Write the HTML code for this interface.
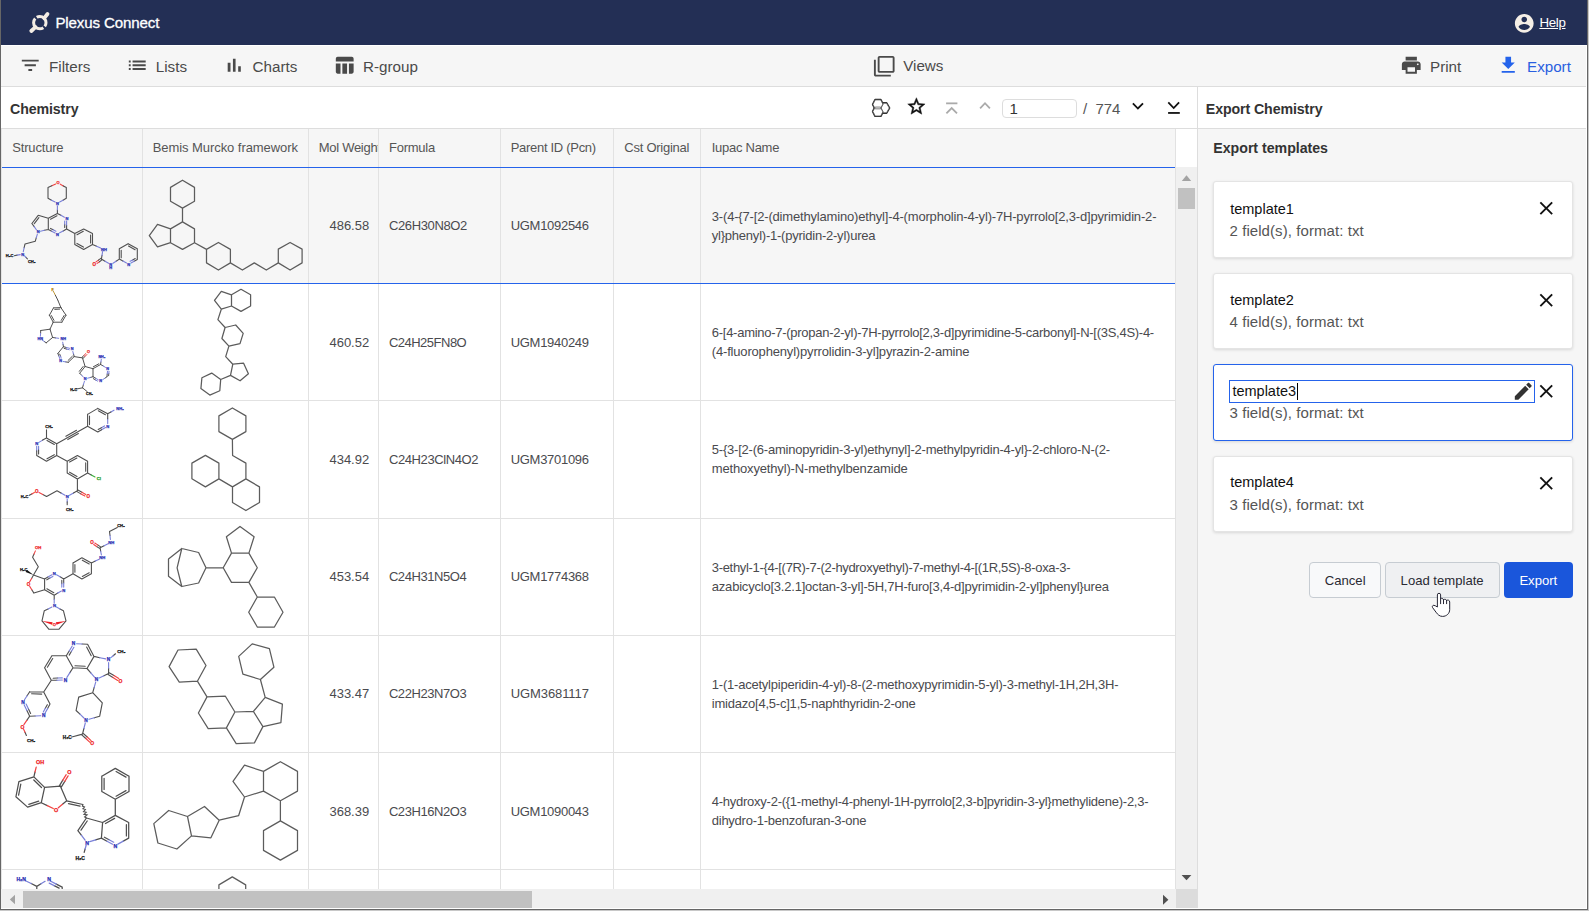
<!DOCTYPE html>
<html lang="en"><head><meta charset="utf-8"><title>Plexus Connect</title>
<style>
html,body{margin:0;padding:0;}
body{width:1589px;height:911px;overflow:hidden;position:relative;background:#fff;font-family:"Liberation Sans",sans-serif;}
.t{position:absolute;white-space:nowrap;line-height:normal;}
.b{position:absolute;}
svg{position:absolute;overflow:visible;}
</style></head><body>
<div class="b" style="left:0px;top:0px;width:1589px;height:44.5px;background:#232f55;"></div>
<span class="t" id="t1" style="left:55.4px;top:14.29px;font-size:15.1px;color:#fff;letter-spacing:-0.127px;-webkit-text-stroke:0.3px #fff;">Plexus Connect</span>
<span class="t" id="t2" style="left:1539.4px;top:14.75px;font-size:13.3px;color:#fff;letter-spacing:-0.303px;text-decoration:underline;">Help</span>
<div class="b" style="left:0px;top:46px;width:1589px;height:40px;background:#f6f6f6;"></div>
<div class="b" style="left:0px;top:86px;width:1589px;height:1px;background:#dddddd;"></div>
<span class="t" id="t3" style="left:49.1px;top:58.0px;font-size:15.2px;color:#4a4a4a;">Filters</span>
<span class="t" id="t4" style="left:155.8px;top:58.0px;font-size:15.2px;color:#4a4a4a;">Lists</span>
<span class="t" id="t5" style="left:252.6px;top:58.0px;font-size:15.2px;color:#4a4a4a;">Charts</span>
<span class="t" id="t6" style="left:363.0px;top:58.0px;font-size:15.2px;color:#4a4a4a;">R-group</span>
<span class="t" id="t7" style="left:903.2px;top:57.0px;font-size:15.2px;color:#4a4a4a;">Views</span>
<span class="t" id="t8" style="left:1430.0px;top:58.0px;font-size:15.2px;color:#4a4a4a;">Print</span>
<span class="t" id="t9" style="left:1527.0px;top:58.0px;font-size:15.2px;color:#2a5fe0;">Export</span>
<div class="b" style="left:0px;top:128px;width:1589px;height:1px;background:#dddddd;"></div>
<span class="t" id="t10" style="left:10px;top:100.92px;font-size:14.2px;color:#333;font-weight:700;letter-spacing:-0.105px;">Chemistry</span>
<span class="t" id="t11" style="left:1205.8px;top:100.92px;font-size:14.2px;color:#333;font-weight:700;letter-spacing:-0.101px;">Export Chemistry</span>
<div class="b" style="left:1002px;top:99px;width:75px;height:19px;background:#fff;box-sizing:border-box;border:1px solid #ddd;border-radius:4px;"></div>
<span class="t" id="t12" style="left:1009.5px;top:100.18px;font-size:15px;color:#333;">1</span>
<span class="t" id="t13" style="left:1083px;top:100.18px;font-size:15px;color:#555;">/</span>
<span class="t" id="t14" style="left:1095.5px;top:100.18px;font-size:15px;color:#555;letter-spacing:-0.052px;">774</span>
<div class="b" style="left:1197px;top:87px;width:1px;height:822px;background:#dddddd;"></div>
<div class="b" style="left:1198px;top:129px;width:389px;height:780px;background:#f6f6f6;"></div>
<span class="t" id="t15" style="left:1213.3px;top:139.92px;font-size:14.2px;color:#333;font-weight:700;letter-spacing:-0.026px;">Export templates</span>
<div class="b" style="left:1px;top:129px;width:1175px;height:38px;background:#f6f6f6;"></div>
<div class="b" style="left:1px;top:167px;width:1175px;height:1px;background:#2563eb;"></div>
<span class="t" id="t16" style="left:12.3px;top:140.03px;font-size:13px;color:#555;letter-spacing:-0.182px;">Structure</span>
<span class="t" id="t17" style="left:152.7px;top:140.03px;font-size:13px;color:#555;letter-spacing:-0.062px;">Bemis Murcko framework</span>
<div class="b" style="left:309px;top:129px;width:69px;height:38px;overflow:hidden;"><span class="t" id="t18" style="left:9.7px;top:11.03px;font-size:13px;color:#555;letter-spacing:-0.28px;">Mol Weight</span></div>
<span class="t" id="t19" style="left:389px;top:140.03px;font-size:13px;color:#555;letter-spacing:-0.26px;">Formula</span>
<span class="t" id="t20" style="left:510.7px;top:140.03px;font-size:13px;color:#555;letter-spacing:-0.296px;">Parent ID (Pcn)</span>
<span class="t" id="t21" style="left:624.3px;top:140.03px;font-size:13px;color:#555;letter-spacing:-0.254px;">Cst Original</span>
<span class="t" id="t22" style="left:711.7px;top:140.03px;font-size:13px;color:#555;letter-spacing:-0.263px;">Iupac Name</span>
<div class="b" style="left:1px;top:168px;width:1175px;height:115px;background:#f6f6f6;"></div>
<div class="b" style="left:1px;top:283px;width:1175px;height:1px;background:#2563eb;"></div>
<div class="b" style="left:1px;top:400px;width:1175px;height:1px;background:#e2e2e2;"></div>
<div class="b" style="left:1px;top:518px;width:1175px;height:1px;background:#e2e2e2;"></div>
<div class="b" style="left:1px;top:635px;width:1175px;height:1px;background:#e2e2e2;"></div>
<div class="b" style="left:1px;top:752px;width:1175px;height:1px;background:#e2e2e2;"></div>
<div class="b" style="left:1px;top:869px;width:1175px;height:1px;background:#e2e2e2;"></div>
<div class="b" style="left:142px;top:129px;width:1px;height:760px;background:#e2e2e2;"></div>
<div class="b" style="left:308px;top:129px;width:1px;height:760px;background:#e2e2e2;"></div>
<div class="b" style="left:378px;top:129px;width:1px;height:760px;background:#e2e2e2;"></div>
<div class="b" style="left:500px;top:129px;width:1px;height:760px;background:#e2e2e2;"></div>
<div class="b" style="left:613px;top:129px;width:1px;height:760px;background:#e2e2e2;"></div>
<div class="b" style="left:700px;top:129px;width:1px;height:760px;background:#e2e2e2;"></div>
<div class="b" style="left:1px;top:129px;width:1px;height:760px;background:#e4e4e4;"></div>
<div class="b" style="left:2px;top:167px;width:1174px;height:1px;background:#2563eb;"></div>
<div class="b" style="left:2px;top:283px;width:1174px;height:1px;background:#2563eb;"></div>
<span class="t" id="t23" style="left:329.5px;top:218.03px;font-size:13px;color:#4a4a4e;letter-spacing:-0.03px;">486.58</span>
<span class="t" id="t24" style="left:388.9px;top:218.03px;font-size:13px;color:#4a4a4e;letter-spacing:-0.364px;">C26H30N8O2</span>
<span class="t" id="t25" style="left:510.7px;top:218.03px;font-size:13px;color:#4a4a4e;letter-spacing:-0.29px;">UGM1092546</span>
<span class="t" id="t26" style="left:711.8px;top:209.03px;font-size:13px;color:#4a4a4e;letter-spacing:-0.176px;">3-(4-{7-[2-(dimethylamino)ethyl]-4-(morpholin-4-yl)-7H-pyrrolo[2,3-d]pyrimidin-2-</span>
<span class="t" id="t27" style="left:711.8px;top:228.03px;font-size:13px;color:#4a4a4e;letter-spacing:-0.227px;">yl}phenyl)-1-(pyridin-2-yl)urea</span>
<span class="t" id="t28" style="left:329.5px;top:335.03px;font-size:13px;color:#4a4a4e;letter-spacing:-0.03px;">460.52</span>
<span class="t" id="t29" style="left:388.9px;top:335.03px;font-size:13px;color:#4a4a4e;letter-spacing:-0.503px;">C24H25FN8O</span>
<span class="t" id="t30" style="left:510.7px;top:335.03px;font-size:13px;color:#4a4a4e;letter-spacing:-0.29px;">UGM1940249</span>
<span class="t" id="t31" style="left:711.8px;top:325.03px;font-size:13px;color:#4a4a4e;letter-spacing:-0.271px;">6-[4-amino-7-(propan-2-yl)-7H-pyrrolo[2,3-d]pyrimidine-5-carbonyl]-N-[(3S,4S)-4-</span>
<span class="t" id="t32" style="left:711.8px;top:344.03px;font-size:13px;color:#4a4a4e;letter-spacing:-0.176px;">(4-fluorophenyl)pyrrolidin-3-yl]pyrazin-2-amine</span>
<span class="t" id="t33" style="left:329.5px;top:452.03px;font-size:13px;color:#4a4a4e;letter-spacing:-0.03px;">434.92</span>
<span class="t" id="t34" style="left:388.9px;top:452.03px;font-size:13px;color:#4a4a4e;letter-spacing:-0.386px;">C24H23ClN4O2</span>
<span class="t" id="t35" style="left:510.7px;top:452.03px;font-size:13px;color:#4a4a4e;letter-spacing:-0.29px;">UGM3701096</span>
<span class="t" id="t36" style="left:711.8px;top:442.03px;font-size:13px;color:#4a4a4e;letter-spacing:-0.216px;">5-{3-[2-(6-aminopyridin-3-yl)ethynyl]-2-methylpyridin-4-yl}-2-chloro-N-(2-</span>
<span class="t" id="t37" style="left:711.8px;top:461.03px;font-size:13px;color:#4a4a4e;letter-spacing:-0.163px;">methoxyethyl)-N-methylbenzamide</span>
<span class="t" id="t38" style="left:329.5px;top:569.03px;font-size:13px;color:#4a4a4e;letter-spacing:-0.03px;">453.54</span>
<span class="t" id="t39" style="left:388.9px;top:569.03px;font-size:13px;color:#4a4a4e;letter-spacing:-0.427px;">C24H31N5O4</span>
<span class="t" id="t40" style="left:510.7px;top:569.03px;font-size:13px;color:#4a4a4e;letter-spacing:-0.29px;">UGM1774368</span>
<span class="t" id="t41" style="left:711.8px;top:560.03px;font-size:13px;color:#4a4a4e;letter-spacing:-0.328px;">3-ethyl-1-{4-[(7R)-7-(2-hydroxyethyl)-7-methyl-4-[(1R,5S)-8-oxa-3-</span>
<span class="t" id="t42" style="left:711.8px;top:579.03px;font-size:13px;color:#4a4a4e;letter-spacing:-0.208px;">azabicyclo[3.2.1]octan-3-yl]-5H,7H-furo[3,4-d]pyrimidin-2-yl]phenyl}urea</span>
<span class="t" id="t43" style="left:329.5px;top:686.03px;font-size:13px;color:#4a4a4e;letter-spacing:-0.03px;">433.47</span>
<span class="t" id="t44" style="left:388.9px;top:686.03px;font-size:13px;color:#4a4a4e;letter-spacing:-0.427px;">C22H23N7O3</span>
<span class="t" id="t45" style="left:510.7px;top:686.03px;font-size:13px;color:#4a4a4e;letter-spacing:-0.086px;">UGM3681117</span>
<span class="t" id="t46" style="left:711.8px;top:677.03px;font-size:13px;color:#4a4a4e;letter-spacing:-0.221px;">1-(1-acetylpiperidin-4-yl)-8-(2-methoxypyrimidin-5-yl)-3-methyl-1H,2H,3H-</span>
<span class="t" id="t47" style="left:711.8px;top:696.03px;font-size:13px;color:#4a4a4e;letter-spacing:-0.221px;">imidazo[4,5-c]1,5-naphthyridin-2-one</span>
<span class="t" id="t48" style="left:329.5px;top:804.03px;font-size:13px;color:#4a4a4e;letter-spacing:-0.03px;">368.39</span>
<span class="t" id="t49" style="left:388.9px;top:804.03px;font-size:13px;color:#4a4a4e;letter-spacing:-0.427px;">C23H16N2O3</span>
<span class="t" id="t50" style="left:510.7px;top:804.03px;font-size:13px;color:#4a4a4e;letter-spacing:-0.29px;">UGM1090043</span>
<span class="t" id="t51" style="left:711.8px;top:794.03px;font-size:13px;color:#4a4a4e;letter-spacing:-0.255px;">4-hydroxy-2-({1-methyl-4-phenyl-1H-pyrrolo[2,3-b]pyridin-3-yl}methylidene)-2,3-</span>
<span class="t" id="t52" style="left:711.8px;top:813.03px;font-size:13px;color:#4a4a4e;letter-spacing:-0.257px;">dihydro-1-benzofuran-3-one</span>
<div class="b" style="left:1176px;top:167px;width:21px;height:722px;background:#f0f0f0;"></div>
<div class="b" style="left:1175px;top:129px;width:1px;height:760px;background:#e2e2e2;"></div>
<div class="b" style="left:1178px;top:188px;width:17px;height:21px;background:#c1c1c1;"></div>
<div class="b" style="left:1px;top:889px;width:1175px;height:19px;background:#f0f0f0;"></div>
<div class="b" style="left:23px;top:891px;width:509px;height:17px;background:#c1c1c1;"></div>
<div class="b" style="left:1176px;top:889px;width:21px;height:19px;background:#dcdcdc;"></div>
<div class="b" style="left:1213px;top:181px;width:360px;height:77px;background:#fff;box-sizing:border-box;border:1px solid #e4e4e4;border-radius:3px;box-shadow:0 1px 3px rgba(0,0,0,.12);"></div>
<div class="b" style="left:1213px;top:273px;width:360px;height:76px;background:#fff;box-sizing:border-box;border:1px solid #e4e4e4;border-radius:3px;box-shadow:0 1px 3px rgba(0,0,0,.12);"></div>
<div class="b" style="left:1213px;top:364px;width:360px;height:77px;background:#fff;box-sizing:border-box;border:1px solid #2563eb;border-radius:3px;box-shadow:0 1px 3px rgba(0,0,0,.12);"></div>
<div class="b" style="left:1213px;top:456px;width:360px;height:76px;background:#fff;box-sizing:border-box;border:1px solid #e4e4e4;border-radius:3px;box-shadow:0 1px 3px rgba(0,0,0,.12);"></div>
<span class="t" id="t53" style="left:1230.2px;top:200.85px;font-size:14.5px;color:#111;">template1</span>
<span class="t" id="t54" style="left:1229.5px;top:222.38px;font-size:15px;color:#555;letter-spacing:0.073px;">2 field(s), format: txt</span>
<span class="t" id="t55" style="left:1230.2px;top:291.65px;font-size:14.5px;color:#111;">template2</span>
<span class="t" id="t56" style="left:1229.5px;top:313.18px;font-size:15px;color:#555;letter-spacing:0.073px;">4 field(s), format: txt</span>
<div class="b" style="left:1229px;top:380px;width:306px;height:23px;background:#fff;box-sizing:border-box;border:1px solid #2563eb;"></div>
<span class="t" id="t57" style="left:1232.4px;top:383.45px;font-size:14.5px;color:#111;">template3</span>
<div class="b" style="left:1297px;top:383px;width:1px;height:17px;background:#000;"></div>
<span class="t" id="t58" style="left:1229.5px;top:404.38px;font-size:15px;color:#555;letter-spacing:0.073px;">3 field(s), format: txt</span>
<span class="t" id="t59" style="left:1230.2px;top:474.25px;font-size:14.5px;color:#111;">template4</span>
<span class="t" id="t60" style="left:1229.5px;top:496.38px;font-size:15px;color:#555;letter-spacing:0.073px;">3 field(s), format: txt</span>
<div class="b" style="left:1309px;top:562px;width:72px;height:36px;background:#f8f9fa;box-sizing:border-box;border:1px solid #c6ccd2;border-radius:4px;"></div>
<div class="b" style="left:1385px;top:562px;width:115px;height:36px;background:#eff0f2;box-sizing:border-box;border:1px solid #c6ccd2;border-radius:4px;"></div>
<div class="b" style="left:1504px;top:562px;width:69px;height:36px;background:#1a56db;border-radius:4px;"></div>
<span class="t" id="t61" style="left:1324.8px;top:572.63px;font-size:13.1px;color:#2a2a33;">Cancel</span>
<span class="t" id="t62" style="left:1400.6px;top:572.63px;font-size:13.1px;color:#2a2a33;">Load template</span>
<span class="t" id="t63" style="left:1519.4px;top:572.63px;font-size:13.1px;color:#fff;">Export</span>
<svg style="left:19.40px;top:54.35px" width="22.50" height="22.50" viewBox="0 0 24 24"><path fill="#4a4a4a" d="M10 18h4v-2h-4v2zM3 6v2h18V6H3zm3 7h12v-2H6v2z"/></svg>
<svg style="left:125.75px;top:54.35px" width="22.50" height="22.50" viewBox="0 0 24 24"><path fill="#4a4a4a" d="M3 13h2v-2H3v2zm0 4h2v-2H3v2zm0-8h2V7H3v2zm4 4h14v-2H7v2zm0 4h14v-2H7v2zM7 7v2h14V7H7z"/></svg>
<svg style="left:222.75px;top:54.30px" width="22.50" height="22.50" viewBox="0 0 24 24"><path fill="#4a4a4a" d="M5 9.2h3V19H5zM10.6 5h2.8v14h-2.8zm5.6 8H19v6h-2.8z"/></svg>
<svg style="left:332.65px;top:54.25px" width="22.50" height="22.50" viewBox="0 0 24 24"><path fill="#4a4a4a" d="M10 10.02h5V21h-5zM17 21h3c1.1 0 2-.9 2-2v-9h-5v11zm3-18H5c-1.1 0-2 .9-2 2v3h19V5c0-1.1-.9-2-2-2zM3 19c0 1.1.9 2 2 2h3V10H3v9z"/></svg>
<svg style="left:873.35px;top:54.75px" width="22.50" height="22.50" viewBox="0 0 24 24"><path fill="#4a4a4a" d="M3 5H1v16c0 1.1.9 2 2 2h16v-2H3V5zm18-4H7c-1.1 0-2 .9-2 2v14c0 1.1.9 2 2 2h14c1.1 0 2-.9 2-2V3c0-1.1-.9-2-2-2zm0 16H7V3h14v14z"/></svg>
<svg style="left:1399.65px;top:54.15px" width="22.50" height="22.50" viewBox="0 0 24 24"><path fill="#4a4a4a" d="M19 8H5c-1.66 0-3 1.34-3 3v6h4v4h12v-4h4v-6c0-1.66-1.34-3-3-3zm-3 11H8v-5h8v5zm3-7c-.55 0-1-.45-1-1s.45-1 1-1 1 .45 1 1-.45 1-1 1zm-1-9H6v4h12V3z"/></svg>
<svg style="left:1496.75px;top:54.35px" width="22.50" height="22.50" viewBox="0 0 24 24"><path fill="#2463eb" d="M19 9h-4V3H9v6H5l7 7 7-7zM5 18v2h14v-2H5z"/></svg>
<svg style="left:1512.75px;top:12.05px" width="22.50" height="22.50" viewBox="0 0 24 24"><path fill="#f5efe6" d="M12 2C6.48 2 2 6.48 2 12s4.48 10 10 10 10-4.48 10-10S17.52 2 12 2zm0 3c1.66 0 3 1.34 3 3s-1.34 3-3 3-3-1.34-3-3 1.34-3 3-3zm0 14.2c-2.5 0-4.71-1.28-6-3.22.03-1.99 4-3.08 6-3.08 1.99 0 5.97 1.09 6 3.08-1.29 1.94-3.5 3.22-6 3.22z"/></svg>
<svg style="left:905.60px;top:95.70px" width="20.80" height="20.80" viewBox="0 0 24 24"><path stroke="#111" stroke-width="0.5" fill="#111" d="M22 9.24l-7.19-.62L12 2 9.19 8.63 2 9.24l5.46 4.73L5.82 21 12 17.27 18.18 21l-1.63-7.03L22 9.24zM12 15.4l-3.76 2.27 1-4.28-3.32-2.88 4.38-.38L12 6.1l1.71 4.04 4.38.38-3.32 2.88 1 4.28L12 15.4z"/></svg>
<svg style="left:1534.75px;top:197.35px" width="22.50" height="22.50" viewBox="0 0 24 24"><path fill="#111" d="M19 6.41L17.59 5 12 10.59 6.41 5 5 6.41 10.59 12 5 17.59 6.41 19 12 13.41 17.59 19 19 17.59 13.41 12z"/></svg>
<svg style="left:1534.75px;top:288.75px" width="22.50" height="22.50" viewBox="0 0 24 24"><path fill="#111" d="M19 6.41L17.59 5 12 10.59 6.41 5 5 6.41 10.59 12 5 17.59 6.41 19 12 13.41 17.59 19 19 17.59 13.41 12z"/></svg>
<svg style="left:1534.75px;top:380.45px" width="22.50" height="22.50" viewBox="0 0 24 24"><path fill="#111" d="M19 6.41L17.59 5 12 10.59 6.41 5 5 6.41 10.59 12 5 17.59 6.41 19 12 13.41 17.59 19 19 17.59 13.41 12z"/></svg>
<svg style="left:1534.75px;top:471.85px" width="22.50" height="22.50" viewBox="0 0 24 24"><path fill="#111" d="M19 6.41L17.59 5 12 10.59 6.41 5 5 6.41 10.59 12 5 17.59 6.41 19 12 13.41 17.59 19 19 17.59 13.41 12z"/></svg>
<svg style="left:1512.25px;top:380.25px" width="22.50" height="22.50" viewBox="0 0 24 24"><path fill="#333" d="M3 17.25V21h3.75L17.81 9.94l-3.75-3.75L3 17.25zM20.71 7.04c.39-.39.39-1.02 0-1.41l-2.34-2.34c-.39-.39-1.02-.39-1.41 0l-1.83 1.83 3.75 3.75 1.83-1.83z"/></svg>
<svg style="left:0;top:0" width="1589" height="911"><g fill="none" stroke="#aaa" stroke-width="1.8" stroke-linecap="butt" stroke-linejoin="miter"><path d="M946.1 103.35H957.4"/><path d="M946.4 113.4L951.7 108.1L957 113.4"/><path d="M980.1 108.3L985 103.2L989.9 108.3"/></g></svg>
<svg style="left:0;top:0" width="1589" height="911"><g fill="none" stroke="#111" stroke-width="1.8" stroke-linecap="butt" stroke-linejoin="miter"><path d="M1132.9 103.3L1137.9 108.5L1143 103.3"/><path d="M1168.3 102.4L1173.7 108L1179.1 102.4"/><path d="M1168.1 112.95H1179.8"/></g></svg>
<svg style="left:0;top:0" width="1000" height="130"><path d="M872.96 104.39L875.21 99.94L880.71 99.94L882.96 104.39L880.71 108.84L875.21 108.84Z" fill="none" stroke="#2a2a2a" stroke-width="2.2" stroke-linejoin="round"/><path d="M872.96 111.52L875.21 107.07L880.71 107.07L882.96 111.52L880.71 115.97L875.21 115.97Z" fill="none" stroke="#2a2a2a" stroke-width="2.2" stroke-linejoin="round"/><path d="M880.75 108.00L883.50 103.20L886.50 103.20L889.25 108.00L886.50 112.80L883.50 112.80Z" fill="none" stroke="#2a2a2a" stroke-width="2.2" stroke-linejoin="round"/><path d="M872.96 104.39L875.21 99.94L880.71 99.94L882.96 104.39L880.71 108.84L875.21 108.84Z" fill="#fff"/><path d="M872.96 111.52L875.21 107.07L880.71 107.07L882.96 111.52L880.71 115.97L875.21 115.97Z" fill="#fff"/><path d="M880.75 108.00L883.50 103.20L886.50 103.20L889.25 108.00L886.50 112.80L883.50 112.80Z" fill="#fff"/><path d="M872.96 104.39L875.21 99.94L880.71 99.94L882.96 104.39L880.71 108.84L875.21 108.84Z" fill="none" stroke="#5a5a5a" stroke-width="0.8"/><path d="M872.96 111.52L875.21 107.07L880.71 107.07L882.96 111.52L880.71 115.97L875.21 115.97Z" fill="none" stroke="#5a5a5a" stroke-width="0.8"/><path d="M880.75 108.00L883.50 103.20L886.50 103.20L889.25 108.00L886.50 112.80L883.50 112.80Z" fill="none" stroke="#5a5a5a" stroke-width="0.8"/></svg>
<svg style="left:0;top:0" width="200" height="45"><g fill="none" stroke="#f4ede4"><circle cx="39.8" cy="22.65" r="6.2" stroke-width="3" stroke-dasharray="3.97 1.8 17.68 1.8 13.71 0"/><path d="M44.2 18.2L47.5 14M35.4 27.1L31.3 31" stroke-width="3.8" stroke-linecap="round"/></g></svg>
<svg style="left:0;top:0" width="1589" height="700"><path d="M1437.4 607L1437.4 594.9A1.6 1.6 0 0 1 1440.6 594.9L1440.6 598.6C1441.5 598.1 1443.2 598.3 1443.5 599.8C1444.5 599 1446.3 599.2 1446.6 600.5C1447.6 599.7 1449.7 600 1449.7 602L1449.7 609.5C1449.7 613.5 1446.5 616.4 1442.5 616.4C1439.5 616.4 1437.8 614.6 1436 612.2L1432.6 607.6C1431.9 606.4 1432.6 605.2 1433.8 605.3C1435 605.4 1436.2 606.3 1437.4 607Z" fill="#fff" stroke="#1a1a2a" stroke-width="0.95" stroke-linejoin="round"/><path d="M1440.6 598.6V603.7M1443.5 599.8V603.7M1446.6 600.5V603.7" fill="none" stroke="#1a1a2a" stroke-width="0.95" stroke-linecap="round"/></svg>
<svg style="left:0;top:0" width="1589" height="911"><path d="M1186.5 175.3L1191.2 181H1181.8Z" fill="#a3a3a3"/><path d="M1181.6 874.9H1191.4L1186.5 880.2Z" fill="#505050"/><path d="M1163 894.7L1168.4 899.7L1163 904.7Z" fill="#505050"/><path d="M15 894.7L9.8 899.5L15 904.3Z" fill="#a3a3a3"/></svg>
<svg style="left:0;top:0;overflow:hidden" width="1176" height="889" viewBox="0 0 1176 889"><path d="M182.5 180.2L194.5 187.4L194.5 201.3L182.5 208.1L170.5 201.3L170.5 187.4ZM182.5 208.1L182.5 221.9M182.5 221.9L194.5 228.9L194.5 242.7L182.5 249.4L170.5 242.7L170.5 228.9ZM170.5 228.9L157.5 224.4L149.3 235.7L157.5 246.9L170.5 242.7M194.5 242.7L206.5 249.4M206.5 249.4L218.4 242.5L230.4 249.4L230.4 262.9L218.4 270.0L206.5 262.9ZM230.4 262.9L242.4 270.0L254.3 262.9L266.3 270.0L278.3 262.9M278.3 262.9L278.3 249.1L290.1 242.5L302.1 249.1L302.1 262.9L290.1 270.0Z" fill="none" stroke="#5c5c5c" stroke-width="1.25" stroke-linejoin="round" stroke-linecap="round"/><path d="M231.5 294.8L241.0 289.3L250.6 294.8L250.6 306.0L241.0 311.4L231.5 306.0ZM231.5 294.8L221.3 291.4L214.5 300.3L221.3 309.2L231.5 306.0M221.3 309.2L217.9 319.6L225.1 327.5M225.1 327.5L235.7 325.0L243.2 333.4L240.0 343.6L228.9 346.1L221.9 338.5ZM228.9 346.1L225.7 356.6L232.8 364.2M232.8 364.2L243.6 363.2L248.4 373.8L240.1 380.8L230.5 375.4ZM230.5 375.4L220.7 379.5M220.7 379.5L211.7 373.1L201.9 377.8L200.9 388.6L209.8 395.1L219.8 390.7Z" fill="none" stroke="#5c5c5c" stroke-width="1.25" stroke-linejoin="round" stroke-linecap="round"/><path d="M232.4 408.0L245.9 415.9L245.9 431.6L232.4 439.4L218.9 431.6L218.9 415.9ZM232.4 439.4L232.6 455.5L245.9 463.1L245.9 478.9M245.9 478.9L259.5 486.9L259.5 502.5L245.9 510.5L232.5 502.5L232.5 486.9ZM232.5 486.9L218.9 478.9M218.9 478.9L218.9 463.1L205.4 455.4L191.9 463.1L191.9 478.7L205.4 486.9Z" fill="none" stroke="#5c5c5c" stroke-width="1.25" stroke-linejoin="round" stroke-linecap="round"/><path d="M240.0 526.4L254.1 536.8L248.9 553.1L231.5 553.1L226.4 536.8ZM231.5 553.1L248.9 553.1L257.3 567.8L248.9 582.4L231.5 582.4L223.2 567.8ZM223.2 567.8L206.0 567.8M206.0 567.8L198.6 552.5L181.8 548.5L168.5 559.1L168.5 576.3L181.8 586.5L198.6 583.0ZM181.8 548.5L177.1 567.8L181.8 586.5M248.9 582.4L257.3 597.0M257.3 597.0L274.4 597.0L283.0 612.2L274.4 627.0L257.3 627.0L248.7 612.2Z" fill="none" stroke="#5c5c5c" stroke-width="1.25" stroke-linejoin="round" stroke-linecap="round"/><path d="M178.0 650.0L196.2 649.1L206.0 665.5L197.4 681.2L179.3 682.1L169.1 666.6ZM197.4 681.2L207.0 696.9M207.0 696.9L225.4 696.2L234.9 712.0L226.4 727.9L208.2 728.6L198.4 713.0ZM234.9 712.0L253.4 711.4L262.9 726.6L254.4 742.9L236.2 743.6L226.4 727.9ZM253.4 711.4L265.2 697.4L282.4 704.1L280.9 722.6L262.9 726.6M265.2 697.4L260.4 679.5M260.4 679.5L273.9 667.2L269.4 648.7L252.2 643.9L238.7 656.4L242.9 674.2Z" fill="none" stroke="#5c5c5c" stroke-width="1.25" stroke-linejoin="round" stroke-linecap="round"/><path d="M263.5 771.4L280.4 761.7L297.5 771.4L297.5 791.1L280.4 800.8L263.5 791.1ZM263.5 771.4L244.5 765.2L233.0 781.4L244.5 797.0L263.5 791.1M244.5 797.0L238.6 815.7L219.2 820.2M219.2 820.2L204.5 806.5L187.5 816.5L191.5 835.9L210.9 837.8ZM187.5 816.5L168.7 810.5L153.8 823.6L157.9 843.0L176.9 849.0L191.5 835.9M280.4 800.8L280.4 820.9M280.4 820.9L297.5 830.6L297.5 850.4L280.4 860.1L263.5 850.4L263.5 830.6ZM218.9 891.9L218.9 884.9L232.3 876.9L245.7 884.9L245.7 891.9" fill="none" stroke="#5c5c5c" stroke-width="1.25" stroke-linejoin="round" stroke-linecap="round"/></svg>
<svg style="left:0;top:0;overflow:hidden" width="143" height="889" viewBox="0 0 143 889"><path d="M60.3 184.2L63.3 185.9M51.8 185.8L55.7 184.0M98.4 260.1L96.0 261.9M99.5 261.7L97.1 263.4" fill="none" stroke="#f04444" stroke-width="1.1" stroke-linecap="round"/><path d="M63.3 185.9L66.3 187.6M66.3 187.6L66.3 198.3M66.3 198.3L63.0 200.2M51.5 200.2L48.0 198.3M48.0 198.3L48.0 187.6M48.0 187.6L51.8 185.8M57.4 209.7L57.4 213.4M57.4 213.4L60.9 215.3M66.6 225.0L66.6 229.0M64.7 224.3L64.7 227.5M66.6 229.0L63.2 230.9M51.7 231.2L48.3 229.5M53.2 229.8L50.5 228.4M48.3 229.5L48.3 218.2M48.3 218.2L57.4 213.4M50.5 219.2L57.0 215.8M48.3 218.2L38.2 215.3M38.2 215.3L31.9 223.5M38.9 217.6L34.3 223.6M31.9 223.5L34.2 226.6M44.4 230.3L48.3 229.5M36.3 237.7L35.3 241.2M35.3 241.2L25.0 244.0M25.0 244.0L24.1 247.8M17.2 255.1L14.2 255.7M26.0 257.4L27.4 258.8M66.6 229.0L74.8 233.6M74.8 233.6L83.7 229.0M77.0 234.7L83.3 231.3M83.7 229.0L92.5 233.6M92.5 233.6L92.5 244.4M90.6 235.1L90.6 242.9M92.5 244.4L83.7 249.4M83.7 249.4L74.8 244.4M83.4 247.1L77.0 243.4M74.8 244.4L74.8 233.6M92.5 244.4L96.6 246.2M102.0 255.4L101.4 259.1M100.8 258.4L98.4 260.1M101.9 259.9L99.5 261.7M101.4 259.1L105.0 261.2M116.1 261.2L119.3 259.1M119.3 259.1L119.3 248.8M121.2 257.7L121.2 250.2M119.3 248.8L128.1 243.7M128.1 243.7L137.3 248.8M128.5 246.1L135.1 249.7M137.3 248.8L137.3 259.5M137.3 259.5L134.2 261.2M135.2 258.5L132.7 259.9M122.9 261.1L119.3 259.1" fill="none" stroke="#505050" stroke-width="1.1" stroke-linecap="round"/><path d="M63.0 200.2L59.7 202.1M55.1 202.1L51.5 200.2M57.4 205.9L57.4 209.7M60.9 215.3L64.4 217.2M66.6 221.1L66.6 225.0M64.7 221.1L64.7 224.3M63.2 230.9L59.7 232.8M55.1 232.9L51.7 231.2M55.9 231.2L53.2 229.8M34.2 226.6L36.4 229.7M40.5 231.2L44.4 230.3M37.3 234.3L36.3 237.7M24.1 247.8L23.3 251.6M20.2 254.6L17.2 255.1M24.6 255.9L26.0 257.4M96.6 246.2L100.6 248.0M102.6 251.6L102.0 255.4M105.0 261.2L108.6 263.3M113.0 263.2L116.1 261.2M134.2 261.2L131.0 262.9M132.7 259.9L130.1 261.3M126.5 263.0L122.9 261.1" fill="none" stroke="#7a81d8" stroke-width="1.1" stroke-linecap="round"/><text x="58.1" y="184.3" font-size="4" font-weight="700" fill="#ee1c24" stroke="#ee1c24" stroke-width="0.25" text-anchor="middle" font-family="Liberation Sans,sans-serif">O</text><text x="57.4" y="205.0" font-size="4" font-weight="700" fill="#2a30b4" stroke="#2a30b4" stroke-width="0.25" text-anchor="middle" font-family="Liberation Sans,sans-serif">N</text><text x="66.9" y="220.2" font-size="4" font-weight="700" fill="#2a30b4" stroke="#2a30b4" stroke-width="0.25" text-anchor="middle" font-family="Liberation Sans,sans-serif">N</text><text x="57.4" y="235.5" font-size="4" font-weight="700" fill="#2a30b4" stroke="#2a30b4" stroke-width="0.25" text-anchor="middle" font-family="Liberation Sans,sans-serif">N</text><text x="38.2" y="233.4" font-size="4" font-weight="700" fill="#2a30b4" stroke="#2a30b4" stroke-width="0.25" text-anchor="middle" font-family="Liberation Sans,sans-serif">N</text><text x="22.7" y="255.5" font-size="4" font-weight="700" fill="#2a30b4" stroke="#2a30b4" stroke-width="0.25" text-anchor="middle" font-family="Liberation Sans,sans-serif">N</text><text x="9.6" y="257.4" font-size="4" font-weight="700" fill="#111" stroke="#111" stroke-width="0.25" text-anchor="middle" font-family="Liberation Sans,sans-serif">H₃C</text><text x="31.7" y="263.0" font-size="4" font-weight="700" fill="#111" stroke="#111" stroke-width="0.25" text-anchor="middle" font-family="Liberation Sans,sans-serif">CH₃</text><text x="103.9" y="250.5" font-size="4" font-weight="700" fill="#2a30b4" stroke="#2a30b4" stroke-width="0.25" text-anchor="middle" font-family="Liberation Sans,sans-serif">NH</text><text x="94.2" y="266.1" font-size="4.5" font-weight="700" fill="#ee1c24" stroke="#ee1c24" stroke-width="0.25" text-anchor="middle" font-family="Liberation Sans,sans-serif">O</text><text x="110.8" y="265.6" font-size="4" font-weight="700" fill="#2a30b4" stroke="#2a30b4" stroke-width="0.25" text-anchor="middle" font-family="Liberation Sans,sans-serif">N</text><text x="110.8" y="269.4" font-size="4" font-weight="700" fill="#2a30b4" stroke="#2a30b4" stroke-width="0.25" text-anchor="middle" font-family="Liberation Sans,sans-serif">H</text><text x="128.7" y="265.9" font-size="4" font-weight="700" fill="#2a30b4" stroke="#2a30b4" stroke-width="0.25" text-anchor="middle" font-family="Liberation Sans,sans-serif">N</text><path d="M53.0 290.6L55.4 295.3" fill="none" stroke="#c09a3a" stroke-width="1.0" stroke-linecap="round"/><path d="M55.4 295.3L57.7 299.9M57.7 299.9L60.9 307.6M60.9 307.6L66.0 315.2M66.0 315.2L61.9 322.2M64.1 315.5L61.2 320.4M61.9 322.2L53.2 322.2M53.2 322.2L49.4 315.2M54.0 320.4L51.3 315.5M49.4 315.2L53.5 307.9M53.5 307.9L60.9 307.6M54.8 309.4L59.7 309.1M53.2 322.2L50.0 329.2M50.0 329.2L52.6 337.5M52.6 337.5L46.2 342.8M46.2 342.8L44.3 341.5M40.6 333.3L40.7 330.5M40.7 330.5L50.0 329.2M52.6 337.5L55.6 337.9M63.1 344.4L63.4 346.7M63.4 346.7L66.5 347.5M64.2 348.4L66.7 349.1M73.5 354.0L74.2 356.6M74.2 356.6L68.3 362.3M72.3 356.3L68.1 360.4M68.3 362.3L65.7 361.9M58.8 356.0L57.9 353.4M60.5 356.1L59.7 354.1M57.9 353.4L63.4 346.7M74.2 356.6L82.5 357.9M83.0 358.4L85.0 356.5M82.0 357.3L83.9 355.4M82.5 357.9L85.1 366.5M85.1 366.5L79.7 373.2M83.1 366.5L79.3 371.3M79.7 373.2L81.5 375.1M90.3 377.5L93.0 376.7M93.0 376.7L93.0 368.7M93.0 368.7L85.1 366.5M93.0 368.7L100.6 364.5M93.3 366.8L98.8 363.8M100.6 364.5L103.1 365.9M107.2 374.0L107.0 376.7M108.8 373.6L108.6 375.7M107.0 376.7L104.9 378.2M95.7 378.3L93.0 376.7M95.4 379.9L93.3 378.6M100.6 364.5L100.9 362.0M83.4 384.6L82.5 387.8M82.5 387.8L76.2 389.1M82.5 387.8L87.3 391.7" fill="none" stroke="#505050" stroke-width="1.0" stroke-linecap="round"/><path d="M44.3 341.5L42.4 340.2M40.4 336.2L40.6 333.3M55.6 337.9L58.7 338.3M62.7 342.2L63.1 344.4M66.5 347.5L69.6 348.3M66.7 349.1L69.2 349.7M72.8 351.5L73.5 354.0M65.7 361.9L63.2 361.5M59.8 358.6L58.8 356.0M61.2 358.1L60.5 356.1M81.5 375.1L83.3 377.0M87.6 378.2L90.3 377.5M103.1 365.9L105.5 367.4M107.5 371.3L107.2 374.0M109.0 371.4L108.8 373.6M104.9 378.2L102.8 379.6M98.3 379.8L95.7 378.3M97.6 381.1L95.4 379.9M100.9 362.0L101.3 359.4M84.4 381.4L83.4 384.6" fill="none" stroke="#7a81d8" stroke-width="1.0" stroke-linecap="round"/><path d="M85.0 356.5L86.9 354.5M83.9 355.4L85.9 353.5" fill="none" stroke="#f04444" stroke-width="1.0" stroke-linecap="round"/><text x="52.6" y="290.7" font-size="3.5" font-weight="700" fill="#b8860b" stroke="#b8860b" stroke-width="0.25" text-anchor="middle" font-family="Liberation Sans,sans-serif">F</text><text x="40.2" y="340.1" font-size="3.8" font-weight="700" fill="#2a30b4" stroke="#2a30b4" stroke-width="0.25" text-anchor="middle" font-family="Liberation Sans,sans-serif">HN</text><text x="63.2" y="340.1" font-size="3.8" font-weight="700" fill="#2a30b4" stroke="#2a30b4" stroke-width="0.25" text-anchor="middle" font-family="Liberation Sans,sans-serif">NH</text><text x="72.1" y="350.3" font-size="3.8" font-weight="700" fill="#2a30b4" stroke="#2a30b4" stroke-width="0.25" text-anchor="middle" font-family="Liberation Sans,sans-serif">N</text><text x="60.6" y="362.4" font-size="3.8" font-weight="700" fill="#2a30b4" stroke="#2a30b4" stroke-width="0.25" text-anchor="middle" font-family="Liberation Sans,sans-serif">N</text><text x="88.5" y="353.3" font-size="3.8" font-weight="700" fill="#ee1c24" stroke="#ee1c24" stroke-width="0.25" text-anchor="middle" font-family="Liberation Sans,sans-serif">O</text><text x="101.9" y="357.9" font-size="3.6" font-weight="700" fill="#2a30b4" stroke="#2a30b4" stroke-width="0.25" text-anchor="middle" font-family="Liberation Sans,sans-serif">NH₂</text><text x="107.7" y="370.1" font-size="3.8" font-weight="700" fill="#2a30b4" stroke="#2a30b4" stroke-width="0.25" text-anchor="middle" font-family="Liberation Sans,sans-serif">N</text><text x="100.6" y="382.4" font-size="3.8" font-weight="700" fill="#2a30b4" stroke="#2a30b4" stroke-width="0.25" text-anchor="middle" font-family="Liberation Sans,sans-serif">N</text><text x="85.1" y="380.3" font-size="3.8" font-weight="700" fill="#2a30b4" stroke="#2a30b4" stroke-width="0.25" text-anchor="middle" font-family="Liberation Sans,sans-serif">N</text><text x="73.6" y="390.8" font-size="3.6" font-weight="700" fill="#111" stroke="#111" stroke-width="0.25" text-anchor="middle" font-family="Liberation Sans,sans-serif">H₃C</text><text x="89.5" y="394.5" font-size="3.6" font-weight="700" fill="#111" stroke="#111" stroke-width="0.25" text-anchor="middle" font-family="Liberation Sans,sans-serif">CH₃</text><path d="M38.9 442.4L42.7 440.1M36.7 450.9L36.7 446.3M38.6 450.1L38.6 446.3M107.7 418.7L107.7 423.6M105.5 427.5L101.6 429.7M104.5 425.9L101.4 427.7M110.9 412.0L114.0 410.2M73.5 493.0L69.5 495.3M67.2 499.1L67.2 501.9M65.0 495.3L61.0 493.0" fill="none" stroke="#7a81d8" stroke-width="1.1" stroke-linecap="round"/><path d="M42.7 440.1L46.5 437.9M46.5 437.9L56.7 443.7M47.0 440.4L54.3 444.5M56.7 443.7L56.7 455.5M56.7 455.5L46.5 461.2M54.3 454.7L47.0 458.8M46.5 461.2L36.7 455.5M36.7 455.5L36.7 450.9M38.6 453.9L38.6 450.1M46.5 437.9L46.5 429.9M56.7 443.7L66.9 437.9M66.9 437.9L77.4 432.0M67.8 439.6L78.4 433.6M65.9 436.3L76.5 430.3M77.4 432.0L87.6 426.2M87.6 426.2L87.6 414.4M89.5 424.6L89.5 416.0M87.6 414.4L97.8 408.4M97.8 408.4L107.7 413.7M98.3 410.8L105.4 414.7M107.7 413.7L107.7 418.7M101.6 429.7L97.8 432.0M101.4 427.7L98.2 429.5M97.8 432.0L87.6 426.2M107.7 413.7L110.9 412.0M56.7 455.5L67.2 461.2M67.2 461.2L77.4 455.5M69.6 462.1L76.9 458.0M77.4 455.5L87.6 461.2M87.6 461.2L87.6 473.0M85.7 462.9L85.7 471.3M87.6 473.0L77.4 479.0M77.4 479.0L67.2 473.0M77.0 476.5L69.6 472.2M67.2 473.0L67.2 461.2M87.6 473.0L91.3 474.9M77.4 479.0L77.4 490.8M77.0 491.6L80.9 493.9M77.9 490.0L81.9 492.2M77.4 490.8L73.5 493.0M67.2 501.9L67.2 504.7M61.0 493.0L57.0 490.8M57.0 490.8L46.6 496.5M46.6 496.5L42.8 494.5M31.8 493.9L29.3 495.3" fill="none" stroke="#505050" stroke-width="1.1" stroke-linecap="round"/><path d="M91.3 474.9L95.0 476.9" fill="none" stroke="#3cae3c" stroke-width="1.1" stroke-linecap="round"/><path d="M80.9 493.9L84.9 496.1M81.9 492.2L85.8 494.4M42.8 494.5L39.0 492.4M34.4 492.4L31.8 493.9" fill="none" stroke="#f04444" stroke-width="1.1" stroke-linecap="round"/><text x="36.7" y="445.2" font-size="4.2" font-weight="700" fill="#2a30b4" stroke="#2a30b4" stroke-width="0.25" text-anchor="middle" font-family="Liberation Sans,sans-serif">N</text><text x="49.1" y="427.7" font-size="4" font-weight="700" fill="#111" stroke="#111" stroke-width="0.25" text-anchor="middle" font-family="Liberation Sans,sans-serif">CH₃</text><text x="107.7" y="428.0" font-size="4.2" font-weight="700" fill="#2a30b4" stroke="#2a30b4" stroke-width="0.25" text-anchor="middle" font-family="Liberation Sans,sans-serif">N</text><text x="120.1" y="409.8" font-size="4" font-weight="700" fill="#2a30b4" stroke="#2a30b4" stroke-width="0.25" text-anchor="middle" font-family="Liberation Sans,sans-serif">NH₂</text><text x="98.8" y="480.0" font-size="4.2" font-weight="700" fill="#1e9e1e" stroke="#1e9e1e" stroke-width="0.25" text-anchor="middle" font-family="Liberation Sans,sans-serif">Cl</text><text x="88.3" y="498.1" font-size="4.5" font-weight="700" fill="#ee1c24" stroke="#ee1c24" stroke-width="0.25" text-anchor="middle" font-family="Liberation Sans,sans-serif">O</text><text x="67.2" y="498.0" font-size="4.2" font-weight="700" fill="#2a30b4" stroke="#2a30b4" stroke-width="0.25" text-anchor="middle" font-family="Liberation Sans,sans-serif">N</text><text x="69.8" y="510.7" font-size="4" font-weight="700" fill="#111" stroke="#111" stroke-width="0.25" text-anchor="middle" font-family="Liberation Sans,sans-serif">CH₃</text><text x="36.7" y="492.8" font-size="4.5" font-weight="700" fill="#ee1c24" stroke="#ee1c24" stroke-width="0.25" text-anchor="middle" font-family="Liberation Sans,sans-serif">O</text><text x="24.6" y="498.0" font-size="4" font-weight="700" fill="#111" stroke="#111" stroke-width="0.25" text-anchor="middle" font-family="Liberation Sans,sans-serif">H₃C</text><path d="M44.6 578.9L48.3 576.8M46.8 579.8L49.9 578.1M60.1 576.8L63.7 578.9M63.7 578.9L63.7 583.0M61.8 580.4L61.8 583.7M57.8 593.1L54.2 595.2M54.2 595.2L44.6 589.7M53.8 592.7L46.9 588.8M44.6 589.7L44.6 578.9M44.6 578.9L33.5 575.0M33.5 575.0L31.6 578.5M31.8 589.8L33.9 593.1M33.9 593.1L44.6 589.7M33.5 575.0L38.3 566.8M38.3 566.8L32.6 557.2M32.6 557.2L34.0 554.1M63.7 578.9L73.0 573.8M73.0 573.8L73.0 562.9M74.9 572.3L74.9 564.5M73.0 562.9L81.9 557.8M81.9 557.8L91.4 562.9M82.3 560.2L89.2 563.9M91.4 562.9L91.4 573.8M91.4 573.8L81.9 578.9M89.2 572.8L82.3 576.5M81.9 578.9L73.0 573.8M91.4 562.9L95.3 561.1M100.7 551.3L100.1 547.7M100.6 546.9L97.7 544.9M99.6 548.4L96.6 546.5M100.1 547.7L104.1 545.7M110.0 535.5L109.5 531.5M109.5 531.5L117.3 527.4M54.2 595.2L54.2 599.2M60.0 608.9L63.4 610.7M63.4 610.7L66.0 620.9M66.0 620.9L59.0 629.2M59.0 629.2L48.8 629.2M48.8 629.2L42.0 620.9M42.0 620.9L44.3 610.7M44.3 610.7L48.1 608.9" fill="none" stroke="#505050" stroke-width="1.1" stroke-linecap="round"/><path d="M48.3 576.8L52.0 574.8M49.9 578.1L52.9 576.4M56.5 574.8L60.1 576.8M63.7 583.0L63.7 587.1M61.8 583.7L61.8 587.1M61.4 591.0L57.8 593.1M95.3 561.1L99.2 559.2M101.4 554.9L100.7 551.3M104.1 545.7L108.1 543.8M110.4 539.5L110.0 535.5M54.2 599.2L54.2 603.3M56.5 607.1L60.0 608.9M48.1 608.9L51.9 607.0" fill="none" stroke="#7a81d8" stroke-width="1.1" stroke-linecap="round"/><path d="M31.6 578.5L29.6 581.9M29.7 586.4L31.8 589.8M34.0 554.1L35.4 550.9M97.7 544.9L94.8 543.0M96.6 546.5L93.7 544.5" fill="none" stroke="#f04444" stroke-width="1.1" stroke-linecap="round"/><path d="M33.5 575.0L26.9 569.7L25.6 572.0Z" fill="#111"/><path d="M42.0 620.9L52.0 624.8L52.6 622.3Z" fill="#ee1c24"/><path d="M66.0 620.9L55.8 622.3L56.5 624.8Z" fill="#ee1c24"/><text x="54.2" y="575.0" font-size="4.2" font-weight="700" fill="#2a30b4" stroke="#2a30b4" stroke-width="0.25" text-anchor="middle" font-family="Liberation Sans,sans-serif">N</text><text x="63.7" y="591.5" font-size="4.2" font-weight="700" fill="#2a30b4" stroke="#2a30b4" stroke-width="0.25" text-anchor="middle" font-family="Liberation Sans,sans-serif">N</text><text x="28.4" y="585.8" font-size="4.5" font-weight="700" fill="#ee1c24" stroke="#ee1c24" stroke-width="0.25" text-anchor="middle" font-family="Liberation Sans,sans-serif">O</text><text x="23.7" y="571.4" font-size="4" font-weight="700" fill="#111" stroke="#111" stroke-width="0.25" text-anchor="middle" font-family="Liberation Sans,sans-serif">H₃C</text><text x="38.2" y="549.2" font-size="4.2" font-weight="700" fill="#ee1c24" stroke="#ee1c24" stroke-width="0.25" text-anchor="middle" font-family="Liberation Sans,sans-serif">OH</text><text x="102.3" y="559.4" font-size="4.2" font-weight="700" fill="#2a30b4" stroke="#2a30b4" stroke-width="0.25" text-anchor="middle" font-family="Liberation Sans,sans-serif">NH</text><text x="92.1" y="543.9" font-size="4.5" font-weight="700" fill="#ee1c24" stroke="#ee1c24" stroke-width="0.25" text-anchor="middle" font-family="Liberation Sans,sans-serif">O</text><text x="111.3" y="543.7" font-size="4.2" font-weight="700" fill="#2a30b4" stroke="#2a30b4" stroke-width="0.25" text-anchor="middle" font-family="Liberation Sans,sans-serif">NH</text><text x="121.0" y="526.8" font-size="4" font-weight="700" fill="#111" stroke="#111" stroke-width="0.25" text-anchor="middle" font-family="Liberation Sans,sans-serif">CH₃</text><text x="54.5" y="607.4" font-size="4.2" font-weight="700" fill="#2a30b4" stroke="#2a30b4" stroke-width="0.25" text-anchor="middle" font-family="Liberation Sans,sans-serif">N</text><text x="54.5" y="625.7" font-size="4.2" font-weight="700" fill="#ee1c24" stroke="#ee1c24" stroke-width="0.25" text-anchor="middle" font-family="Liberation Sans,sans-serif">O</text><path d="M51.9 655.7L66.3 655.7M66.3 655.7L73.0 667.8M73.0 667.8L69.9 672.6M56.8 680.2L51.3 680.3M57.7 678.0L53.2 678.2M51.3 680.3L44.6 667.8M44.6 667.8L51.9 655.7M47.4 667.2L52.7 658.5M66.3 655.7L69.2 651.0M69.2 655.1L71.5 651.2M82.1 644.0L87.6 644.3M87.6 644.3L94.0 656.4M86.6 647.0L91.2 655.7M94.0 656.4L87.0 668.5M87.0 668.5L73.0 667.8M85.1 666.3L75.0 665.8M94.0 656.4L99.8 657.7M108.6 668.1L108.6 673.6M108.6 673.6L103.9 675.8M90.8 672.8L87.0 668.5M108.1 674.5L112.9 677.4M109.2 672.7L114.0 675.6M113.2 655.7L115.5 653.8M94.2 687.4L92.7 692.7M92.7 692.7L102.3 702.9M102.3 702.9L99.7 716.2M99.7 716.2L94.3 717.8M80.0 714.2L76.1 710.5M76.1 710.5L78.7 697.1M78.7 697.1L92.7 692.7M83.9 728.5L82.5 734.1M81.8 734.8L85.8 738.5M83.2 733.3L87.2 737.0M82.5 734.1L71.8 737.0M51.3 680.3L43.7 692.0M43.7 692.0L50.0 704.1M50.0 704.1L47.6 708.6M47.3 704.7L45.3 708.3M35.2 716.0L29.7 716.2M29.7 716.2L26.9 710.6M30.6 713.4L28.4 708.7M27.1 695.7L29.7 691.7M29.7 691.7L43.7 692.0M31.6 693.8L41.7 694.1M29.7 716.2L26.8 720.4M25.0 732.3L26.4 735.5" fill="none" stroke="#505050" stroke-width="1.15" stroke-linecap="round"/><path d="M69.9 672.6L66.9 677.4M62.3 680.0L56.8 680.2M62.3 677.9L57.7 678.0M69.2 651.0L72.1 646.2M71.5 651.2L73.9 647.3M76.6 643.8L82.1 644.0M99.8 657.7L105.7 658.9M108.6 662.6L108.6 668.1M103.9 675.8L99.2 678.0M94.5 677.1L90.8 672.8M110.9 657.6L113.2 655.7M95.7 682.2L94.2 687.4M94.3 717.8L89.0 719.3M83.9 718.0L80.0 714.2M85.3 723.0L83.9 728.5M47.6 708.6L45.1 713.0M45.3 708.3L43.3 712.0M40.7 715.7L35.2 716.0M26.9 710.6L24.2 704.9M28.4 708.7L26.1 704.0M24.5 699.7L27.1 695.7" fill="none" stroke="#7a81d8" stroke-width="1.15" stroke-linecap="round"/><path d="M112.9 677.4L117.7 680.4M114.0 675.6L118.8 678.6M85.8 738.5L89.7 742.2M87.2 737.0L91.1 740.7M26.8 720.4L23.9 724.6M23.5 729.1L25.0 732.3" fill="none" stroke="#f04444" stroke-width="1.15" stroke-linecap="round"/><text x="65.6" y="681.8" font-size="4.8" font-weight="700" fill="#2a30b4" stroke="#2a30b4" stroke-width="0.25" text-anchor="middle" font-family="Liberation Sans,sans-serif">N</text><text x="73.6" y="645.4" font-size="4.8" font-weight="700" fill="#2a30b4" stroke="#2a30b4" stroke-width="0.25" text-anchor="middle" font-family="Liberation Sans,sans-serif">N</text><text x="108.6" y="661.3" font-size="4.8" font-weight="700" fill="#2a30b4" stroke="#2a30b4" stroke-width="0.25" text-anchor="middle" font-family="Liberation Sans,sans-serif">N</text><text x="96.5" y="681.3" font-size="4.8" font-weight="700" fill="#2a30b4" stroke="#2a30b4" stroke-width="0.25" text-anchor="middle" font-family="Liberation Sans,sans-serif">N</text><text x="120.5" y="682.6" font-size="5" font-weight="700" fill="#ee1c24" stroke="#ee1c24" stroke-width="0.25" text-anchor="middle" font-family="Liberation Sans,sans-serif">O</text><text x="121.4" y="652.9" font-size="4.4" font-weight="700" fill="#111" stroke="#111" stroke-width="0.25" text-anchor="middle" font-family="Liberation Sans,sans-serif">CH₃</text><text x="86.1" y="721.8" font-size="4.8" font-weight="700" fill="#2a30b4" stroke="#2a30b4" stroke-width="0.25" text-anchor="middle" font-family="Liberation Sans,sans-serif">N</text><text x="92.3" y="745.2" font-size="5" font-weight="700" fill="#ee1c24" stroke="#ee1c24" stroke-width="0.25" text-anchor="middle" font-family="Liberation Sans,sans-serif">O</text><text x="67.2" y="739.0" font-size="4.6" font-weight="700" fill="#111" stroke="#111" stroke-width="0.25" text-anchor="middle" font-family="Liberation Sans,sans-serif">H₃C</text><text x="43.7" y="717.3" font-size="4.8" font-weight="700" fill="#2a30b4" stroke="#2a30b4" stroke-width="0.25" text-anchor="middle" font-family="Liberation Sans,sans-serif">N</text><text x="22.9" y="704.0" font-size="4.8" font-weight="700" fill="#2a30b4" stroke="#2a30b4" stroke-width="0.25" text-anchor="middle" font-family="Liberation Sans,sans-serif">N</text><text x="22.4" y="728.5" font-size="5" font-weight="700" fill="#ee1c24" stroke="#ee1c24" stroke-width="0.25" text-anchor="middle" font-family="Liberation Sans,sans-serif">O</text><text x="31.2" y="741.5" font-size="4.4" font-weight="700" fill="#111" stroke="#111" stroke-width="0.25" text-anchor="middle" font-family="Liberation Sans,sans-serif">CH₃</text><path d="M33.9 776.9L44.6 787.4M33.8 780.0L41.5 787.5M44.6 787.4L41.3 802.7M41.3 802.7L27.6 807.1M38.7 801.2L28.8 804.3M27.6 807.1L15.9 796.8M15.9 796.8L18.9 781.7M18.6 795.1L20.8 784.2M18.9 781.7L33.9 776.9M33.9 776.9L35.0 772.0M44.6 787.4L60.4 786.2M60.4 786.2L66.7 800.8M66.7 800.8L62.5 804.3M47.3 805.6L41.3 802.7M61.4 786.8L64.8 781.3M59.5 785.6L62.8 780.1M66.7 800.8L82.9 804.5M68.5 803.6L80.1 806.2M86.4 818.0L77.9 830.7M87.2 821.0L81.0 830.2M77.9 830.7L81.5 835.4M95.6 839.9L101.4 838.1M101.4 838.1L102.6 822.5M102.6 822.5L86.4 818.0M85.1 849.0L84.2 852.4M102.6 822.5L115.3 815.4M105.5 823.5L114.6 818.4M115.3 815.4L128.7 822.5M128.7 822.5L128.7 838.1M126.4 824.7L126.4 835.9M128.7 838.1L123.3 841.1M107.0 841.2L101.4 838.1M109.1 839.7L104.4 837.2M115.3 815.4L115.3 799.3M115.3 799.3L129.0 791.5M116.1 796.2L126.0 790.6M129.0 791.5L129.0 776.2M129.0 776.2L115.3 768.4M126.0 777.1L116.1 771.5M115.3 768.4L101.8 776.2M101.8 776.2L101.8 791.5M104.1 778.3L104.1 789.4M101.8 791.5L115.3 799.3M31.2 883.5L36.8 886.4M36.8 886.4L41.0 883.8M56.3 884.1L62.2 887.1M54.2 885.6L59.1 888.1M36.8 886.4L36.8 892.7M62.2 887.1L62.2 892.7" fill="none" stroke="#505050" stroke-width="1.25" stroke-linecap="round"/><path d="M35.0 772.0L36.2 767.2M62.5 804.3L58.3 807.8M53.3 808.5L47.3 805.6M64.8 781.3L68.1 775.9M62.8 780.1L66.2 774.7" fill="none" stroke="#f04444" stroke-width="1.25" stroke-linecap="round"/><path d="M81.5 835.4L85.1 840.2M89.8 841.7L95.6 839.9M86.1 845.5L85.1 849.0M123.3 841.1L117.9 844.1M112.6 844.2L107.0 841.2M113.7 842.2L109.1 839.7M25.5 880.7L31.2 883.5M41.0 883.8L45.1 881.3M50.3 881.0L56.3 884.1M49.2 883.1L54.2 885.6" fill="none" stroke="#7a81d8" stroke-width="1.25" stroke-linecap="round"/><text x="40.1" y="763.6" font-size="5.4" font-weight="700" fill="#ee1c24" stroke="#ee1c24" stroke-width="0.25" text-anchor="middle" font-family="Liberation Sans,sans-serif">OH</text><text x="69.3" y="773.9" font-size="5.4" font-weight="700" fill="#ee1c24" stroke="#ee1c24" stroke-width="0.25" text-anchor="middle" font-family="Liberation Sans,sans-serif">O</text><text x="56.0" y="811.7" font-size="5.4" font-weight="700" fill="#ee1c24" stroke="#ee1c24" stroke-width="0.25" text-anchor="middle" font-family="Liberation Sans,sans-serif">O</text><text x="87.2" y="844.8" font-size="5.2" font-weight="700" fill="#2a30b4" stroke="#2a30b4" stroke-width="0.25" text-anchor="middle" font-family="Liberation Sans,sans-serif">N</text><text x="115.3" y="847.8" font-size="5.2" font-weight="700" fill="#2a30b4" stroke="#2a30b4" stroke-width="0.25" text-anchor="middle" font-family="Liberation Sans,sans-serif">N</text><text x="80.2" y="860.0" font-size="5" font-weight="700" fill="#111" stroke="#111" stroke-width="0.25" text-anchor="middle" font-family="Liberation Sans,sans-serif">H₃C</text><text x="21.2" y="880.7" font-size="5" font-weight="700" fill="#2a30b4" stroke="#2a30b4" stroke-width="0.25" text-anchor="middle" font-family="Liberation Sans,sans-serif">H₂N</text><text x="49.1" y="880.6" font-size="5.2" font-weight="700" fill="#2a30b4" stroke="#2a30b4" stroke-width="0.25" text-anchor="middle" font-family="Liberation Sans,sans-serif">N</text><path d="M82.9 804.5L82.4 806.1L84.5 807.0L82.9 808.8L85.4 809.6L83.5 811.6L86.2 812.3L84.0 814.3L87.1 814.9L84.6 817.0L86.4 818.0" fill="none" stroke="#505050" stroke-width="1.1"/></svg>
<div class="b" style="left:0px;top:0px;width:1px;height:911px;background:#666;"></div>
<div class="b" style="left:1586px;top:45px;width:1px;height:864px;background:#fff;"></div>
<div class="b" style="left:1587px;top:0px;width:1px;height:910px;background:#666;"></div>
<div class="b" style="left:1588px;top:0px;width:1px;height:911px;background:#c8c8c8;"></div>
<div class="b" style="left:1px;top:908px;width:1586px;height:1px;background:#fff;"></div>
<div class="b" style="left:0px;top:909px;width:1588px;height:1px;background:#666;"></div>
<div class="b" style="left:0px;top:910px;width:1589px;height:1px;background:#c8c8c8;"></div>
</body></html>
